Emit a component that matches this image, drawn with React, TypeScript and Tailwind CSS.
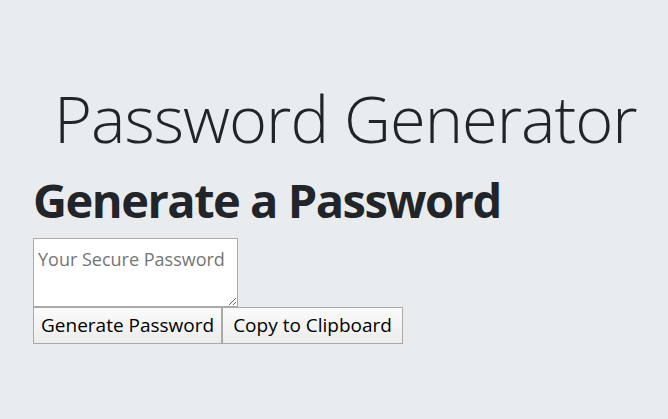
export default function App() {
  return (
    <div className="min-h-[419px] w-full bg-[#e9ecef] px-[33px] pt-[78px] text-[#212529] [font-family:'Open_Sans',sans-serif]">
      <h1 className="ml-[21px] whitespace-nowrap text-[65px] leading-[80px] font-light tracking-[-1px]">Password Generator</h1>
      <h2 className="mt-[14px] whitespace-nowrap text-[47px] leading-[56px] font-bold tracking-[-1.5px]">Generate a Password</h2>
      <div className="mt-[10px] flex flex-col items-start">
        <textarea
          placeholder="Your Secure Password"
          className="h-[69px] w-[205px] resize border border-[#a9a9a9] bg-white px-[4px] pt-[8px] pb-[4px] text-[18px] leading-[24px] placeholder:text-[#757575]"
        />
        <div className="flex">
          <button className="h-[37px] border border-[#a9a9a9] bg-gradient-to-b from-[#fbfbfb] to-[#ececec] px-[7px] text-[19px] text-black">
            Generate Password
          </button>
          <button className="h-[37px] border border-[#a9a9a9] bg-gradient-to-b from-[#fbfbfb] to-[#ececec] px-[10px] text-[19px] text-black">
            Copy to Clipboard
          </button>
        </div>
      </div>
    </div>
  );
}
